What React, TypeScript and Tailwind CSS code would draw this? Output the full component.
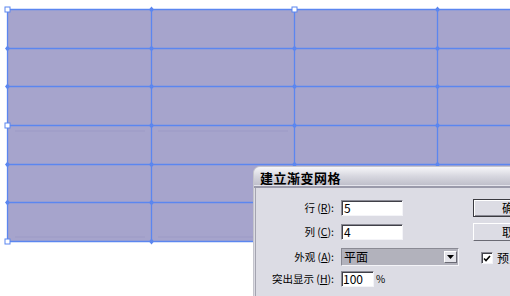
import React from "react";

const XS = [7, 151, 294, 437, 581];
const YS = [9, 48, 86, 125, 164, 202, 241];
const BLUE = "#5b86f0";

function Mesh() {
  const squares = [
    [7, 9],
    [294, 9],
    [7, 125],
    [7, 241],
  ];
  const isSquare = (x: number, y: number) => squares.some(([a, b]) => a === x && b === y);
  return (
    <svg width="510" height="296" className="absolute left-0 top-0" viewBox="0 0 510 296">
      <rect x="7" y="9" width="620" height="232" fill="#a6a4cc" />
      <line x1="15" y1="131" x2="145" y2="131" stroke="#9c9ac6" strokeWidth="1" />
      <line x1="158" y1="131" x2="288" y2="131" stroke="#9c9ac6" strokeWidth="1" />
      <line x1="15" y1="237" x2="145" y2="237" stroke="#9c9ac6" strokeWidth="1" />
      <line x1="158" y1="237" x2="288" y2="237" stroke="#9c9ac6" strokeWidth="1" />
      {YS.map((y) => (
        <line key={"h" + y} x1="7" y1={y + 0.5} x2="620" y2={y + 0.5} stroke={BLUE} strokeWidth="1.3" />
      ))}
      {XS.map((x) => (
        <line key={"v" + x} x1={x + 0.5} y1="9" x2={x + 0.5} y2="241" stroke={BLUE} strokeWidth="1.3" />
      ))}
      {XS.map((x) =>
        YS.map((y) =>
          isSquare(x, y) ? null : (
            <polygon
              key={"m" + x + "-" + y}
              points={`${x + 0.5},${y - 2.5} ${x + 3},${y + 0.5} ${x + 0.5},${y + 3.5} ${x - 2},${y + 0.5}`}
              fill={BLUE}
            />
          )
        )
      )}
      {squares.map(([x, y]) => (
        <rect key={"s" + x + y} x={x - 2} y={y - 2} width="5" height="5" fill="#ffffff" stroke={BLUE} strokeWidth="1" />
      ))}
    </svg>
  );
}

function Label({ text, k }: { text: string; k: string }) {
  return (
    <div className="w-[82px] shrink-0 pr-[4px] text-right text-[10.5px] leading-none text-black whitespace-nowrap">
      {text} (<span className="underline underline-offset-1">{k}</span>):
    </div>
  );
}

const sunken =
  "bg-white border-t border-l border-t-[#8a8a94] border-l-[#8a8a94] border-b border-r border-b-[#f4f4f8] border-r-[#f4f4f8] shadow-[inset_1px_1px_0_#404048]";

export default function App() {
  return (
    <div
      className="relative w-[510px] h-[296px] overflow-hidden bg-white"
      style={{ fontFamily: '"Noto Sans CJK SC", "Noto Sans", sans-serif' }}
    >
      <Mesh />
      <div className="absolute left-[253px] top-[166px] w-[290px] h-[140px] rounded-tl-[7px] border-l border-t border-[#c4c4cc] bg-[#dcdce4] flex flex-col overflow-hidden">
        <div className="h-[21px] shrink-0 flex items-center pl-[6px] pt-[2px] bg-gradient-to-b from-[#f6f6f9] via-[#d6d6de] to-[#bdbdc9] border-b-2 border-b-[#9a9aaa] shadow-[inset_0_-1px_0_#e4e4ec]">
          <span className="text-[13px] font-bold leading-none text-black tracking-[0.5px]">建立渐变网格</span>
        </div>
        <div className="flex flex-1 border-l border-l-[#a4a4b0] ml-px">
          <div className="flex flex-col pt-[12px] w-[203px] shrink-0">
            <div className="flex items-center h-[16px]">
              <Label text="行" k="R" />
              <div className={`ml-[3px] w-[62px] h-[16px] ${sunken} flex items-center pl-[2px] text-[12px] leading-none`}>5</div>
            </div>
            <div className="flex items-center h-[16px] mt-[8px]">
              <Label text="列" k="C" />
              <div className={`ml-[3px] w-[62px] h-[16px] ${sunken} flex items-center pl-[2px] text-[12px] leading-none`}>4</div>
            </div>
            <div className="flex items-center h-[18px] mt-[8px]">
              <Label text="外观" k="A" />
              <div className="ml-[3px] w-[118px] h-[18px] border border-t-[#8a8a94] border-l-[#8a8a94] border-b-[#f4f4f8] border-r-[#f4f4f8] bg-[#b2b2bc] flex items-center">
                <span className="flex-1 pl-[2px] text-[12px] leading-none text-black">平面</span>
                <div className="w-[13px] h-[12px] mr-[1px] bg-[#e4e4ea] border border-t-white border-l-white border-b-[#6a6a74] border-r-[#6a6a74] flex items-center justify-center">
                  <svg width="7" height="4" viewBox="0 0 7 4">
                    <polygon points="0,0 7,0 3.5,4" fill="#000" />
                  </svg>
                </div>
              </div>
            </div>
            <div className="flex items-center h-[16px] mt-[5px]">
              <Label text="突出显示" k="H" />
              <div className={`ml-[3px] w-[33px] h-[16px] ${sunken} flex items-center pl-[1px] text-[12px] leading-none`}>100</div>
              <span className="ml-[2px] text-[10px] leading-none">%</span>
            </div>
          </div>
          <div className="flex flex-col pt-[11px] ml-[14px]">
            <div className="w-[76px] h-[18px] border border-[#3a3a40] bg-[#dcdce4] shadow-[inset_1px_1px_0_#ffffff,inset_-1px_-1px_0_#8a8a94] flex items-center pl-[28px] text-[12px] leading-none">确定</div>
            <div className="w-[76px] h-[18px] mt-[6px] border border-t-[#ffffff] border-l-[#ffffff] border-b-[#6a6a74] border-r-[#6a6a74] bg-[#dcdce4] flex items-center pl-[28px] text-[12px] leading-none">取消</div>
            <div className="flex items-center mt-[11px] ml-[8px]">
              <div className={`w-[12px] h-[12px] ${sunken} flex items-center justify-center`}>
                <svg width="8" height="7" viewBox="0 0 8 7">
                  <polyline points="1,3.5 3,5.5 7,1" fill="none" stroke="#000" strokeWidth="1.6" />
                </svg>
              </div>
              <span className="ml-[4px] text-[12px] leading-none">预览</span>
            </div>
          </div>
        </div>
      </div>
    </div>
  );
}
